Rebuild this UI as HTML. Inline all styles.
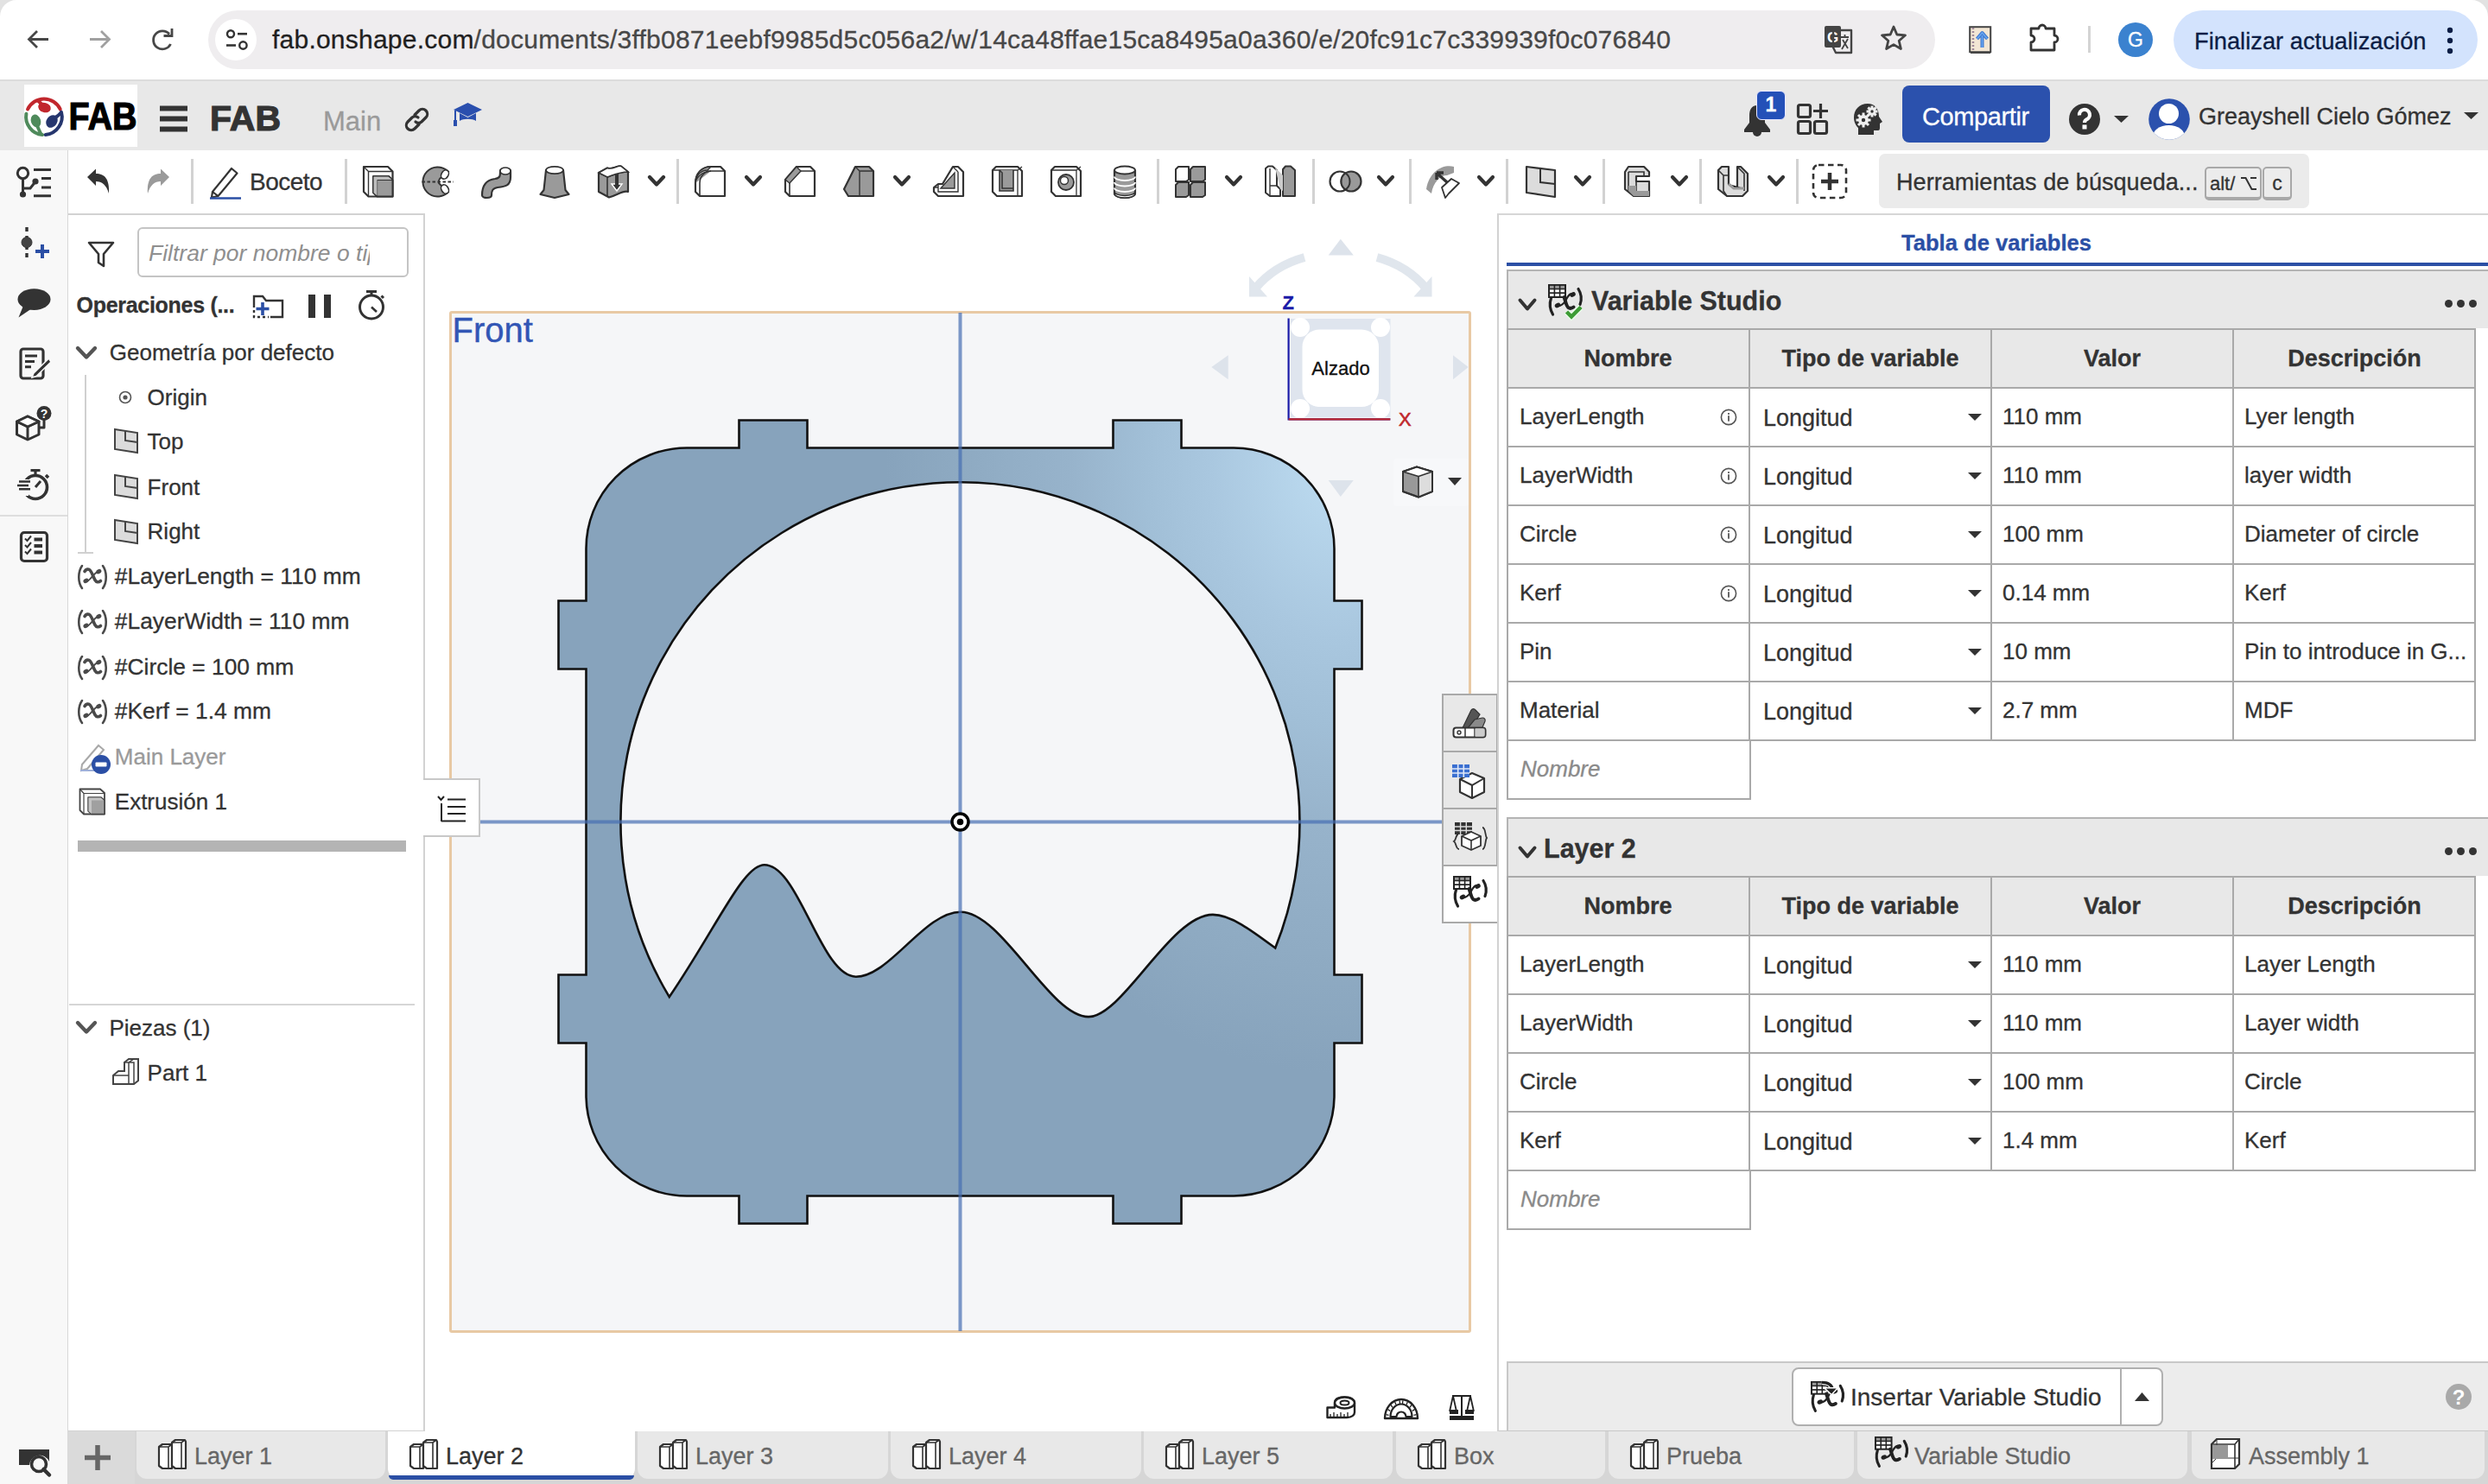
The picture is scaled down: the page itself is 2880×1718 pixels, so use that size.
<!DOCTYPE html>
<html><head><meta charset="utf-8">
<style>
*{box-sizing:border-box;margin:0;padding:0}
html,body{width:2880px;height:1718px;overflow:hidden;background:#fff;font-family:"Liberation Sans",sans-serif;color:#333}
.a{position:absolute}
.t{position:absolute;line-height:1;white-space:nowrap;-webkit-text-stroke:0.3px currentColor}
svg{position:absolute;overflow:visible}
</style></head><body>

<!-- ============ BROWSER BAR ============ -->
<div class="a" style="left:0;top:0;width:2880px;height:92px;background:#fff"></div>
<div class="a" style="left:241px;top:12px;width:1999px;height:68px;border-radius:34px;background:#efedef"></div>
<div class="a" style="left:249px;top:22px;width:48px;height:48px;border-radius:24px;background:#fff"></div>
<div class="t" style="left:315px;top:31px;font-size:30px;color:#1f1f1f;letter-spacing:0.23px">fab.onshape.com<span style="color:#474747">/documents/3ffb0871eebf9985d5c056a2/w/14ca48ffae15ca8495a0a360/e/20fc91c7c339939f0c076840</span></div>
<div class="a" style="left:2516px;top:12px;width:352px;height:68px;border-radius:34px;background:#d3e3fd"></div>
<div class="t" style="left:2540px;top:34px;font-size:27.3px;color:#0b1d45">Finalizar actualización</div>
<div class="a" style="left:2452px;top:26px;width:40px;height:40px;border-radius:20px;background:#3b82cf"></div>
<div class="t" style="left:2452px;top:34.5px;font-size:23px;color:#fff;width:40px;text-align:center">G</div>

<!-- ============ ONSHAPE HEADER ============ -->
<div class="a" style="left:0;top:92px;width:2880px;height:82px;background:#e8e8e8;border-top:2px solid #dcdcdc"></div>
<div class="a" style="left:28px;top:98px;width:131px;height:72px;background:#fff"></div>
<div class="t" style="left:243px;top:117px;font-size:41px;font-weight:700;color:#333;-webkit-text-stroke:1.2px #333">FAB</div>
<div class="t" style="left:374px;top:125px;font-size:31px;color:#9a9a9a">Main</div>
<div class="a" style="left:2202px;top:99px;width:171px;height:66px;border-radius:8px;background:#2b51ad"></div>
<div class="t" style="left:2225px;top:121px;font-size:29px;color:#fff;letter-spacing:-0.4px">Compartir</div>
<div class="t" style="left:2545px;top:122px;font-size:27px;color:#333">Greayshell Cielo Gómez</div>

<!-- ============ LEFT ICON STRIP ============ -->
<div class="a" style="left:0;top:174px;width:80px;height:1544px;background:#f8f8f8;border-right:2px solid #d8d8d8"></div>
<div class="a" style="left:0;top:596px;width:78px;height:2px;background:#dedede"></div>

<svg style="left:0;top:0" width="40" height="40"><path d="M0 40 V19 A19 19 0 0 1 19 0 H40 V-10 H-10 V40 Z" fill="#e2e2e2"/></svg><svg style="left:2840px;top:0" width="40" height="40"><path d="M40 40 V19 A19 19 0 0 0 21 0 H0 V-10 H50 V40 Z" fill="#e2e2e2"/></svg>
<svg style="left:30px;top:33px" width="28" height="26"><path d="M26 12.5 H4 M13 3 L3.5 12.5 L13 22" fill="none" stroke="#474747" stroke-width="2.8"/></svg>
<svg style="left:102px;top:33px" width="28" height="26"><path d="M2 12.5 H24 M15 3 L24.5 12.5 L15 22" fill="none" stroke="#a0a0a0" stroke-width="2.8"/></svg>
<svg style="left:174px;top:32px" width="30" height="29"><path d="M23.5 19 A10.5 10.5 0 1 1 22 7.5" fill="none" stroke="#474747" stroke-width="2.8"/><path d="M15.5 9.5 H25 V1" fill="none" stroke="#474747" stroke-width="2.8"/></svg>
<svg style="left:258px;top:33px" width="32" height="26"><circle cx="9" cy="6.2" r="4" fill="none" stroke="#333" stroke-width="2.4"/><path d="M17 6.2 H28" stroke="#333" stroke-width="2.6"/><circle cx="23.4" cy="19.5" r="4.2" fill="none" stroke="#333" stroke-width="2.4"/><path d="M4 19.5 H15" stroke="#333" stroke-width="2.6"/></svg>
<svg style="left:2111px;top:29px" width="35" height="34"><rect x="1" y="1" width="19" height="25" rx="2" fill="#444"/><text x="10.5" y="20" text-anchor="middle" font-family="Liberation Sans" font-weight="700" font-size="17" fill="#fff">G</text><path d="M14 6 H32 V32 H14 L11 26 V6 Z" fill="none" stroke="#444" stroke-width="2.4" stroke-linejoin="round"/><path d="M20 14 H29 M24.5 11 V14 M21 28 L28 16 M22 17 L28 27" stroke="#444" stroke-width="1.8"/></svg>
<svg style="left:2176px;top:28px" width="32" height="32"><polygon points="16,3 19.8,12 29.5,12.8 22.2,19.2 24.4,28.5 16,23.6 7.6,28.5 9.8,19.2 2.5,12.8 12.2,12" fill="none" stroke="#444" stroke-width="2.8" stroke-linejoin="round"/></svg>
<svg style="left:2279px;top:30px" width="27" height="33"><rect x="1.2" y="1.2" width="24" height="29" fill="#f2e6d4" stroke="#444" stroke-width="2"/><path d="M5 2 V30" stroke="#a08a9a" stroke-width="2.5" stroke-dasharray="2 2"/><path d="M2 31 H25" stroke="#444" stroke-width="2"/><path d="M15.5 25 V11 M9.5 15 L15.5 8 L21.5 15" fill="none" stroke="#3e78d0" stroke-width="4" stroke-linejoin="round"/><path d="M15.5 25 V11 M9.5 15 L15.5 8 L21.5 15" fill="none" stroke="#6aa7f0" stroke-width="1.6"/></svg>
<svg style="left:2348px;top:27px" width="36" height="34"><path d="M3 6 H12 A4 4 0 0 1 20 6 H30 V14 A4 4 0 0 1 30 22 V31 H3 V22 A4 4 0 0 0 3 14 Z" fill="none" stroke="#333" stroke-width="2.8" stroke-linejoin="round"/></svg>
<div class="a" style="left:2417px;top:30px;width:3px;height:31px;background:#d4d4d4"></div>
<svg style="left:2829px;top:30px" width="14" height="34"><circle cx="7" cy="5" r="3.2" fill="#0b1d45"/><circle cx="7" cy="17" r="3.2" fill="#0b1d45"/><circle cx="7" cy="29" r="3.2" fill="#0b1d45"/></svg>
<svg style="left:28px;top:98px" width="131" height="72"><g fill="none" stroke-width="4" stroke-linecap="round"><path d="M4.05 28.5 A20.8 20.8 0 0 1 41.75 28.5" stroke="#c1272d"/><path d="M2.42 33.7 A20.8 20.8 0 0 0 21.1 58" stroke="#4f8a5b"/><path d="M43 31.9 A20.8 20.8 0 0 1 24.7 58" stroke="#26366e"/></g><g transform="rotate(18 23.5 26.5)"><ellipse cx="23.5" cy="26.5" rx="7.5" ry="5.6" fill="#c1272d"/></g><path d="M13 19 C16 21 18 23 20 26 L24 24 C21 20 18 18 16 16 Z" fill="#c1272d"/><g transform="rotate(-18 13.5 42)"><ellipse cx="13.5" cy="42" rx="5.6" ry="7.6" fill="#4f8a5b"/></g><path d="M12 46 C14 50 16 54 17 57 L21 56 C19 52 17 48 16 44 Z" fill="#4f8a5b"/><g transform="rotate(35 32 42.5)"><ellipse cx="32" cy="42.5" rx="6.2" ry="7.8" fill="#26366e"/></g><path d="M34 37 C37 35 40 33 42 30 L44 34 C41 37 38 39 36 41 Z" fill="#26366e"/><text x="51.5" y="51.6" font-family="Liberation Sans" font-weight="700" font-size="45" fill="#000" stroke="#000" stroke-width="1.2" textLength="79" lengthAdjust="spacingAndGlyphs">FAB</text></svg>
<svg style="left:185px;top:122px" width="32" height="31"><path d="M0 3.5 H32 M0 15.5 H32 M0 27.5 H32" stroke="#333" stroke-width="6"/></svg>
<svg style="left:467px;top:124px" width="31" height="29"><g fill="none" stroke="#333" stroke-width="3.2" stroke-linecap="round"><path d="M13 9 L18 4 A5.5 5.5 0 0 1 26 12 L21 17 A5.5 5.5 0 0 1 14 17"/><path d="M18 20 L13 25 A5.5 5.5 0 0 1 5 17 L10 12 A5.5 5.5 0 0 1 17 12"/></g></svg>
<svg style="left:524px;top:118px" width="35" height="30"><polygon points="17.5,1 34,9 17.5,17 1,9" fill="#2a4fae"/><path d="M8 13 V22 C12 19 23 19 27 22 V13 L17.5 18 Z" fill="#2a4fae"/><path d="M3 10 V22" stroke="#2a4fae" stroke-width="2"/><rect x="1" y="21" width="4" height="7" fill="#2a4fae"/></svg>
<svg style="left:2017px;top:118px" width="34" height="40"><path d="M17 4 C10 4 8 10 8 16 V24 L2 32 V35 H32 V32 L26 24 V16 C26 10 24 4 17 4 Z" fill="#333"/><path d="M12 35 A5 5 0 0 0 22 35 Z" fill="#333"/></svg>
<div class="a" style="left:2033px;top:105px;width:34px;height:34px;border-radius:6px;background:#2450b8;border:1.5px solid #e8e8ff"></div>
<div class="t" style="left:2033px;top:110px;width:34px;text-align:center;font-size:23px;font-weight:700;color:#fff">1</div>
<svg style="left:2079px;top:119px" width="39" height="38"><g fill="none" stroke="#333" stroke-width="3.2"><rect x="2.5" y="2.5" width="14" height="14" rx="2"/><rect x="2.5" y="21.5" width="14" height="14" rx="2"/><rect x="21.5" y="21.5" width="14" height="14" rx="2"/><path d="M28.5 1 V18 M20 9.5 H37"/></g></svg>
<svg style="left:2145px;top:119px" width="36" height="38"><path d="M17 1 C7 1 1 8 1 17 C1 23 4 27 6 29 V37 H24 V32 H29 C31 32 31 30 31 28 V24 L34 22 L30 16 C30 7 25 1 17 1 Z" fill="#333"/><g fill="#eee"><circle cx="12" cy="20" r="6"/><circle cx="22" cy="10" r="4.5"/></g><g fill="#333"><circle cx="12" cy="20" r="2.2"/><circle cx="22" cy="10" r="1.7"/></g><g stroke="#eee" stroke-width="3"><path d="M12 11.5 V28.5 M3.5 20 H20.5 M6 14 L18 26 M6 26 L18 14"/><path d="M22 3.5 V16.5 M15.5 10 H28.5 M17.4 5.4 L26.6 14.6 M17.4 14.6 L26.6 5.4"/></g><g fill="#333"><circle cx="12" cy="20" r="2.2"/><circle cx="22" cy="10" r="1.7"/></g></svg>
<svg style="left:2394px;top:119px" width="38" height="38"><circle cx="19" cy="19" r="18" fill="#333"/><path d="M13 14.5 A6 6 0 1 1 21 19.5 C19.5 20.3 19 21 19 23" fill="none" stroke="#fff" stroke-width="4.2"/><rect x="16.5" y="25.5" width="5" height="5" fill="#fff"/></svg>
<svg style="left:2447px;top:134px" width="17" height="8"><polygon points="0,0 17,0 8.5,8" fill="#333"/></svg>
<svg style="left:2487px;top:114px" width="48" height="48"><defs><clipPath id="avc"><circle cx="24" cy="24" r="23.8"/></clipPath></defs><circle cx="24" cy="24" r="23.8" fill="#2b51ad"/><g clip-path="url(#avc)" fill="#fff"><circle cx="23.5" cy="17.5" r="11.5"/><ellipse cx="23.5" cy="45" rx="19" ry="14"/></g></svg>
<svg style="left:2852px;top:130px" width="17" height="8"><polygon points="0,0 17,0 8.5,8" fill="#333"/></svg>
<svg style="left:17px;top:190px" width="46" height="42"><g fill="none" stroke="#333" stroke-width="3"><circle cx="9.5" cy="10.5" r="6.2"/><path d="M9.5 16.7 V35 M9.5 28 H18 L23.5 21"/><path d="M22 6.6 H42 M31 16.5 H42 M31 27 H42 M22 36.8 H42"/></g><circle cx="24" cy="20" r="3.6" fill="#333"/><circle cx="9.5" cy="35" r="3.6" fill="#333"/></svg>
<svg style="left:22px;top:262px" width="38" height="38"><path d="M9 1 V6 M9 11 V14 M9 23 V27 M9 31 V36" stroke="#333" stroke-width="3.4"/><circle cx="9" cy="18.6" r="6" fill="#444" stroke="#333" stroke-width="1"/><path d="M27 21 V37 M19 29 H35" stroke="#2b4fa5" stroke-width="4"/></svg>
<svg style="left:19px;top:332px" width="42" height="38"><ellipse cx="20.5" cy="14.6" rx="19" ry="12.4" fill="#333"/><path d="M8 22 L2.5 35.5 L18 25 Z" fill="#333"/></svg>
<svg style="left:22px;top:402px" width="37" height="39"><rect x="2" y="2" width="26" height="34" rx="3" fill="none" stroke="#333" stroke-width="3.2"/><path d="M7 10 H21 M7 16.5 H18 M7 22.8 H14" stroke="#333" stroke-width="3"/><path d="M34.5 13 L17 30 L15 35 L20 33.5 L37 17 Z" fill="#333" stroke="#f8f8f8" stroke-width="1.5"/></svg>
<svg style="left:17px;top:469px" width="44" height="42"><g fill="none" stroke="#333" stroke-width="3" stroke-linejoin="round"><path d="M15 13 L28 19 V34 L15 40 L2.5 34 V19 Z"/><path d="M2.5 19 L15 25 L28 19 M15 25 V40"/><path d="M28 26 H34 V17"/></g><path d="M15 13 L28 19 L15 25 L2.5 19 Z" fill="#fff" stroke="#333" stroke-width="3" stroke-linejoin="round"/><circle cx="34" cy="9.5" r="8.5" fill="#333"/><text x="34" y="15" text-anchor="middle" font-family="Liberation Sans" font-weight="700" font-size="14" fill="#fff">?</text></svg>
<svg style="left:20px;top:541px" width="40" height="40"><circle cx="21" cy="23" r="13.5" fill="none" stroke="#333" stroke-width="3.6"/><path d="M15.5 3.5 H26.5 M21 3.5 V9" stroke="#333" stroke-width="3.2"/><path d="M33 9 L36 12" stroke="#333" stroke-width="3.5"/><path d="M21 23 L27 16" stroke="#333" stroke-width="3"/><rect x="0" y="14" width="13" height="19" fill="#f8f8f8"/><path d="M2 16.5 H15 M0 21 H13 M2 25.3 H15" stroke="#333" stroke-width="2.6"/></svg>
<svg style="left:22px;top:614px" width="36" height="38"><rect x="2.5" y="2.5" width="30" height="33" rx="3.5" fill="none" stroke="#333" stroke-width="3.2"/><g fill="none" stroke="#333" stroke-width="2"><path d="M7 9.5 L9.5 12 L14 6.5"/><path d="M7 17 L9.5 19.5 L14 14"/><path d="M7 24.5 L9.5 27 L14 21.5"/></g><path d="M17.5 10.5 H27 M17.5 18 H27 M17.5 25.5 H27" stroke="#333" stroke-width="4"/></svg>
<svg style="left:20px;top:1674px" width="40" height="36"><path d="M2 4 H37 V18 A12 12 0 0 0 14 22 H2 Z" fill="#333"/><circle cx="25" cy="21" r="8.5" fill="#f8f8f8" stroke="#333" stroke-width="3.6"/><path d="M30.5 27 L37 33.5" stroke="#333" stroke-width="4.5" stroke-linecap="round"/></svg>
<!-- ============ TOOLBAR ============ -->
<div class="a" style="left:79px;top:174px;width:2801px;height:73px;background:#fff"></div>
<div class="t" style="left:289px;top:197px;font-size:28px;color:#333;letter-spacing:-0.5px">Boceto</div>
<div class="a" style="left:2175px;top:178px;width:498px;height:63px;border-radius:7px;background:#ebebeb"></div>
<div class="t" style="left:2195px;top:197px;font-size:27.1px;color:#333">Herramientas de búsqueda...</div>

<svg style="left:99px;top:194px" width="30" height="31"><path d="M2 11 L12 1.5 V7 C22 7 28 13 27 30 C24 20 19 16 12 16 V21 Z" fill="#333"/></svg>
<svg style="left:170px;top:194px" width="28" height="31"><path d="M26 11 L16 1.5 V7 C6 7 0 13 1 30 C4 20 9 16 16 16 V21 Z" fill="#9a9a9a"/></svg>
<div class="a" style="left:220.5px;top:184px;width:3px;height:52px;background:#d2d2d2"></div>
<svg style="left:241px;top:191px" width="40" height="40"><path d="M5 31 L27 4 L33.5 9.5 L11.5 36 L4 37.5 Z M5 31 L11.5 36" fill="#fff" stroke="#333" stroke-width="2.2" stroke-linejoin="round"/><path d="M2 38.5 H38" stroke="#2b4fa5" stroke-width="2.4"/></svg>
<div class="a" style="left:398.5px;top:184px;width:3px;height:52px;background:#d2d2d2"></div>
<svg style="left:419px;top:191px" width="38" height="38"><path d="M2 2 H30 L35.5 7.5 V36.5 H7.5 L2 31 Z" fill="#fff" stroke="#333" stroke-width="2.2" stroke-linejoin="round"/><path d="M7.5 36.5 V7.5 H35.5 M2 2 L7.5 7.5" fill="none" stroke="#333" stroke-width="1.4"/><path d="M13 13 H31 L35.5 17.5 V36.5 H17.5 L13 32 Z" fill="#9a9a9a" stroke="#333" stroke-width="2" stroke-linejoin="round"/><path d="M17.5 36.5 V17.5 H35.5 M13 13 L17.5 17.5" fill="none" stroke="#333" stroke-width="1.2"/><path d="M13.5 13.5 H30.5 L34.5 17 H17.5 V35.5 L13.5 32 Z" fill="#bdbdbd"/></svg>
<svg style="left:488px;top:192px" width="38" height="38"><path d="M30 6 A17 17 0 1 0 30 31 A6 6 0 0 1 24 24 L20 20 A6 6 0 0 1 24 13 A6 6 0 0 1 30 6 Z" fill="#9a9a9a" stroke="#333" stroke-width="2"/><ellipse cx="27" cy="10" rx="4" ry="5.5" transform="rotate(30 27 10)" fill="#fff" stroke="#333" stroke-width="1.6"/><ellipse cx="27" cy="27" rx="4" ry="5.5" transform="rotate(-30 27 27)" fill="#fff" stroke="#333" stroke-width="1.6"/><path d="M0.5 18.5 H37" stroke="#333" stroke-width="1.8" stroke-dasharray="3.5 2.5"/></svg>
<svg style="left:555px;top:191px" width="40" height="40"><path d="M24 7 C24 3 36 3 36 7 V14 C36 24 30 25 21 26 C15 27 14 30 14 35 C14 39 3 39 3 35 C3 22 10 17 18 16 C24 15 24 13 24 7 Z" fill="#9a9a9a" stroke="#333" stroke-width="2.2"/><ellipse cx="30" cy="7" rx="6" ry="4" fill="#fff" stroke="#333" stroke-width="1.6"/></svg>
<svg style="left:624px;top:191px" width="38" height="40"><path d="M8 6 H28 L30.5 29 L34.5 34 L18 38 L1.5 34 L5.5 29 Z" fill="#9a9a9a" stroke="#333" stroke-width="2.2" stroke-linejoin="round"/><ellipse cx="18" cy="6" rx="10" ry="4.2" fill="#fff" stroke="#333" stroke-width="1.8"/></svg>
<svg style="left:691px;top:191px" width="38" height="40"><path d="M2 9 L12 3.5 C18 6 24 0 28 1.5 L36 8 V31 C30 29 24 35 14 37.5 L2 31 Z" fill="#9a9a9a" stroke="#333" stroke-width="2.2" stroke-linejoin="round"/><path d="M2 9 L12 14 C18 12 26 8 36 8 M12 14 V37" fill="none" stroke="#333" stroke-width="1.6"/><path d="M12 3.5 C18 6 24 0 28 1.5 L36 8 C26 8 18 12 12 14 L2 9 Z" fill="#fff" stroke="#333" stroke-width="1.6"/><path d="M23 10 V24 M17 22 L23 30 L29 22 Z" fill="#333" stroke="#fff" stroke-width="1.4"/><path d="M23 10 V24" stroke="#333" stroke-width="4"/></svg>
<svg style="left:750px;top:203px" width="20" height="13"><polyline points="2,2 10,10.5 18,2" fill="none" stroke="#333" stroke-width="4.2" stroke-linecap="round" stroke-linejoin="round"/></svg>
<div class="a" style="left:782.5px;top:184px;width:3px;height:52px;background:#d2d2d2"></div>
<svg style="left:803px;top:191px" width="38" height="38"><path d="M2 21 C2 10 9 2 20 2 H31 L36 7 V36 H7 L2 31 Z" fill="#fff" stroke="#333" stroke-width="2.2" stroke-linejoin="round"/><path d="M2 21 C2 12 9 6 16 6 L20 2 C9 2 2 10 2 21 Z M2 21 C3 14 9 8 20 7" fill="#9a9a9a" stroke="#333" stroke-width="1.4"/><path d="M7 21 V36 M7 21 C7 13 13 7 20 7 H36" fill="none" stroke="#333" stroke-width="1.6"/></svg>
<svg style="left:862px;top:203px" width="20" height="13"><polyline points="2,2 10,10.5 18,2" fill="none" stroke="#333" stroke-width="4.2" stroke-linecap="round" stroke-linejoin="round"/></svg>
<svg style="left:907px;top:191px" width="38" height="38"><path d="M2 17 L15 2 H31 L36 7 V36 H7 L2 31 Z" fill="#fff" stroke="#333" stroke-width="2.2" stroke-linejoin="round"/><path d="M2 17 L15 2 L20 7 L7 21 Z" fill="#9a9a9a" stroke="#333" stroke-width="1.4"/><path d="M7 21 V36 M20 7 H36" fill="none" stroke="#333" stroke-width="1.6"/></svg>
<svg style="left:975px;top:191px" width="38" height="38"><path d="M2 28 L15 2 H31 L36 7 V36 H7 Z" fill="#9a9a9a" stroke="#333" stroke-width="2.2" stroke-linejoin="round"/><path d="M15 2 L20 7 V36 M20 7 H36" fill="none" stroke="#333" stroke-width="1.4"/></svg>
<svg style="left:1034px;top:203px" width="20" height="13"><polyline points="2,2 10,10.5 18,2" fill="none" stroke="#333" stroke-width="4.2" stroke-linecap="round" stroke-linejoin="round"/></svg>
<svg style="left:1079px;top:191px" width="38" height="38"><path d="M2 26 L7 22 H12 L24 2 H30 L36 8 V36 H7 L2 31 Z" fill="#fff" stroke="#333" stroke-width="2.2" stroke-linejoin="round"/><path d="M7 22 V31 H30 V8 M2 26 H7 M24 2 L30 8" fill="none" stroke="#333" stroke-width="1.4"/><path d="M10 27 L26 9 V27 Z" fill="#9a9a9a" stroke="#333" stroke-width="1.4"/></svg>
<svg style="left:1147px;top:191px" width="38" height="38"><path d="M2 6 L6 2 H31 L36 7 V36 H7 L2 31 Z" fill="#fff" stroke="#333" stroke-width="2.2" stroke-linejoin="round"/><path d="M2 6 H31 V36 M31 6 L36 2" fill="none" stroke="#333" stroke-width="1.3"/><path d="M10 6 V30 H26 V6 M10 6 L13 9 V27 H26" fill="#9a9a9a" stroke="#333" stroke-width="1.6"/></svg>
<svg style="left:1215px;top:191px" width="38" height="38"><path d="M2 6 L6 2 H31 L36 7 V36 H7 L2 31 Z" fill="#fff" stroke="#333" stroke-width="2.2" stroke-linejoin="round"/><path d="M2 6 H31 V36 M31 6 L36 2" fill="none" stroke="#333" stroke-width="1.3"/><circle cx="19" cy="20" r="9" fill="#9a9a9a" stroke="#333" stroke-width="1.8"/><circle cx="17" cy="18" r="4.5" fill="#fff" stroke="#333" stroke-width="1.4"/></svg>
<svg style="left:1288px;top:191px" width="30" height="40"><path d="M2 6 V33 A12 5 0 0 0 26 33 V6" fill="#9a9a9a" stroke="#333" stroke-width="2.2"/><ellipse cx="14" cy="6" rx="12" ry="4.5" fill="#fff" stroke="#333" stroke-width="2"/><path d="M2 13.5 A12 4.5 0 0 0 26 13.5 M2 20 A12 4.5 0 0 0 26 20 M2 26.5 A12 4.5 0 0 0 26 26.5" fill="none" stroke="#fff" stroke-width="1.8"/><path d="M2 31 A12 4.5 0 0 0 26 31 V33 A12 5 0 0 1 2 33 Z" fill="#fff" stroke="#333" stroke-width="1.4"/></svg>
<div class="a" style="left:1338.5px;top:184px;width:3px;height:52px;background:#d2d2d2"></div>
<svg style="left:1359px;top:191px" width="38" height="38"><g stroke="#333" stroke-width="2" stroke-linejoin="round"><path d="M2 5 L5 2 H17 V17 L14 19 H2 Z" fill="#fff"/><path d="M19 5 L22 2 H36 V17 L33 19 H19 Z" fill="#9a9a9a"/><path d="M2 23 L5 20 H17 V35 L14 37 H2 Z" fill="#9a9a9a"/><path d="M19 23 L22 20 H36 V35 L33 37 H19 Z" fill="#9a9a9a"/></g></svg>
<svg style="left:1418px;top:203px" width="20" height="13"><polyline points="2,2 10,10.5 18,2" fill="none" stroke="#333" stroke-width="4.2" stroke-linecap="round" stroke-linejoin="round"/></svg>
<svg style="left:1463px;top:191px" width="38" height="38"><path d="M2 4 L5 1.5 H10 L15 6 V24 L19 28 V36 H7 L2 32 Z" fill="#fff" stroke="#333" stroke-width="2" stroke-linejoin="round"/><path d="M22 5 L25 1.5 H31 L36 6 V36 H22 Z" fill="#9a9a9a" stroke="#333" stroke-width="2" stroke-linejoin="round"/><path d="M7 4 V36 M15 24 H7" fill="none" stroke="#333" stroke-width="1.4"/><path d="M13 3 L22 12 V30 L19 28 Z" fill="#ccc"/></svg>
<div class="a" style="left:1518.5px;top:184px;width:3px;height:52px;background:#d2d2d2"></div>
<svg style="left:1538px;top:191px" width="40" height="38"><circle cx="13" cy="19" r="11.5" fill="#fff" stroke="#333" stroke-width="2.2"/><circle cx="26" cy="19" r="11.5" fill="#9a9a9a" stroke="#333" stroke-width="2.2"/><path d="M19.5 9.5 A11.5 11.5 0 0 1 19.5 28.5 A11.5 11.5 0 0 1 19.5 9.5" fill="#9a9a9a" stroke="#333" stroke-width="2"/></svg>
<svg style="left:1594px;top:203px" width="20" height="13"><polyline points="2,2 10,10.5 18,2" fill="none" stroke="#333" stroke-width="4.2" stroke-linecap="round" stroke-linejoin="round"/></svg>
<div class="a" style="left:1630.5px;top:184px;width:3px;height:52px;background:#d2d2d2"></div>
<svg style="left:1649px;top:189px" width="42" height="42"><path d="M34 4 C22 1 6 8 2 30 L8 35 C10 22 18 14 26 14 L34 11 Z" fill="#9a9a9a"/><path d="M20 28 L31 18 L40 23 L28 35 L24 40 Z" fill="#fff" stroke="#333" stroke-width="1.8" stroke-linejoin="round"/><path d="M26 22 L16 13 M14 11 V19 M14 11 H22" fill="none" stroke="#333" stroke-width="3.4"/></svg>
<svg style="left:1710px;top:203px" width="20" height="13"><polyline points="2,2 10,10.5 18,2" fill="none" stroke="#333" stroke-width="4.2" stroke-linecap="round" stroke-linejoin="round"/></svg>
<div class="a" style="left:1742.5px;top:184px;width:3px;height:52px;background:#d2d2d2"></div>
<svg style="left:1765px;top:191px" width="38" height="38"><path d="M2 2 L35 6 V37 L2 32 Z" fill="#dcdcdc" stroke="#333" stroke-width="2.2" stroke-linejoin="round"/><path d="M18 4 V20 L35 22" fill="none" stroke="#333" stroke-width="2"/></svg>
<svg style="left:1822px;top:203px" width="20" height="13"><polyline points="2,2 10,10.5 18,2" fill="none" stroke="#333" stroke-width="4.2" stroke-linecap="round" stroke-linejoin="round"/></svg>
<div class="a" style="left:1854.5px;top:184px;width:3px;height:52px;background:#d2d2d2"></div>
<svg style="left:1879px;top:191px" width="32" height="38"><path d="M6 2 H24 L30 8 V13 H15 V19 H30 V36 H12 L2 28 V8 Z" fill="#dcdcdc" stroke="#333" stroke-width="2.2" stroke-linejoin="round"/><path d="M6 8 H24 V13 M6 8 V30 L12 36 M15 19 V30 H12" fill="none" stroke="#333" stroke-width="1.6"/><path d="M6 24 V30 L12 36 H30 V30 H15 V24 Z" fill="#9a9a9a"/></svg>
<svg style="left:1934px;top:203px" width="20" height="13"><polyline points="2,2 10,10.5 18,2" fill="none" stroke="#333" stroke-width="4.2" stroke-linecap="round" stroke-linejoin="round"/></svg>
<div class="a" style="left:1966.5px;top:184px;width:3px;height:52px;background:#d2d2d2"></div>
<svg style="left:1987px;top:191px" width="38" height="38"><path d="M6 2 H14 V22 L20 27 H24 V2 L28 2 L36 10 V30 L30 36 H12 L2 28 V6 Z" fill="#dcdcdc" stroke="#333" stroke-width="2.2" stroke-linejoin="round"/><path d="M2 6 L8 12 V30 L12 36 M8 12 L14 12 M24 2 L32 10 V30" fill="none" stroke="#333" stroke-width="1.6"/><path d="M14 22 L20 27 H32" stroke="#999" stroke-width="3"/></svg>
<svg style="left:2046px;top:203px" width="20" height="13"><polyline points="2,2 10,10.5 18,2" fill="none" stroke="#333" stroke-width="4.2" stroke-linecap="round" stroke-linejoin="round"/></svg>
<div class="a" style="left:2078.5px;top:184px;width:3px;height:52px;background:#d2d2d2"></div>
<svg style="left:2097px;top:189px" width="42" height="42"><rect x="2" y="2" width="38" height="38" rx="6" fill="none" stroke="#333" stroke-width="2.6" stroke-dasharray="6.5 4.5"/><path d="M21 11 V31 M11 21 H31" stroke="#333" stroke-width="4.5"/></svg>
<div class="a" style="left:2552px;top:193px;width:66px;height:39px;border:2px solid #a8a8a8;border-bottom-width:4px;border-radius:5px;background:#ececec"></div>
<div class="t" style="left:2558px;top:202px;font-size:22px;color:#333">alt/</div><svg style="left:2593px;top:204px" width="20" height="17"><path d="M1 2 H6.5 L13.5 15 H19 M12 2 H19" fill="none" stroke="#333" stroke-width="2"/></svg>
<div class="a" style="left:2619px;top:193px;width:34px;height:39px;border:2px solid #a8a8a8;border-bottom-width:4px;border-radius:5px;background:#ececec"></div>
<div class="t" style="left:2619px;top:201px;width:34px;text-align:center;font-size:23px;color:#333">c</div>
<!-- ============ FEATURE PANEL ============ -->
<div class="a" style="left:79px;top:247px;width:413px;height:1411px;background:#fff;border:2px solid #d2d2d2;border-left:none"></div>

<!-- ============ VIEWPORT ============ -->
<div class="a" style="left:492px;top:247px;width:1241px;height:1410px;background:#fff"></div>
<div class="a" style="left:520px;top:360px;width:1183px;height:1183px;background:#f5f6f8;border:3px solid #e8c9a4;border-radius:3px"></div>


<!-- viewport drawing -->
<svg class="a" style="left:0;top:0" width="2880" height="1718" viewBox="0 0 2880 1718">
<defs>
<radialGradient id="sg" gradientUnits="userSpaceOnUse" cx="1545" cy="540" r="520" fx="1545" fy="540" gradientTransform="translate(1545 540) scale(1 1.35) translate(-1545 -540)">
<stop offset="0" stop-color="#bddcf1"/><stop offset="0.28" stop-color="#a9c7df"/><stop offset="0.42" stop-color="#a1bfd7"/><stop offset="0.59" stop-color="#97b3cb"/><stop offset="0.83" stop-color="#8eaac2"/><stop offset="1" stop-color="#87a3bc"/></radialGradient>
</defs>
<path fill="url(#sg)" fill-rule="evenodd" stroke="#111" stroke-width="2.6" stroke-linejoin="miter" d="M795.5 518.5 H855.5 V486.5 H934.5 V518.5 H1288.5 V486.5 H1367.5 V518.5 H1428 A116.5 116.5 0 0 1 1544.5 635 V695.5 H1576.5 V774.5 H1544.5 V1128.5 H1576.5 V1207.5 H1544.5 V1268 A116.5 116.5 0 0 1 1428 1384.5 H1367.5 V1416.5 H1288.5 V1384.5 H934.5 V1416.5 H855.5 V1384.5 H795 A116.5 116.5 0 0 1 678.5 1268 V1207.5 H646.5 V1128.5 H678.5 V774.5 H646.5 V695.5 H678.5 V635 A116.5 116.5 0 0 1 795 518.5 Z
M774.8 1154.1 A393 393 0 1 1 1476.2 1097.5 C1450 1078 1425 1058.9 1403.9 1058.9 C1355 1058.9 1300 1177.1 1260 1177.1 C1215 1177.1 1160 1055.7 1112 1055.7 C1070 1055.7 1030 1130.7 990.8 1130.7 C950 1130.7 925 1001.3 884.8 1001.3 C860 1001.3 830 1073 774.8 1154.1 Z"/>
<line x1="1111.5" y1="362" x2="1111.5" y2="1541" stroke="rgb(70,110,178)" stroke-opacity="0.7" stroke-width="4"/>
<line x1="522" y1="951.5" x2="1700" y2="951.5" stroke="rgb(70,110,178)" stroke-opacity="0.7" stroke-width="4"/>
<circle cx="1111.5" cy="951.5" r="9.5" fill="#fff" stroke="#000" stroke-width="3.5"/>
<circle cx="1111.5" cy="951.5" r="3.8" fill="#000"/>
</svg>

<svg style="left:101px;top:279px" width="32" height="31"><path d="M2 2 H30 L19 15 V29 L13 25 V15 Z" fill="none" stroke="#333" stroke-width="2.6" stroke-linejoin="round"/></svg>
<div class="a" style="left:159px;top:263px;width:314px;height:58px;border:2px solid #c4c4c4;border-radius:6px;background:#fff;overflow:hidden"><div class="t" style="left:11px;top:15px;font-size:26.5px;font-style:italic;color:#8f8f8f;width:256px;overflow:hidden;-webkit-text-stroke:0">Filtrar por nombre o tipo</div></div>
<div class="t" style="left:88.6px;top:340.5px;font-size:25px;color:#333;font-weight:700;font-style:normal;letter-spacing:-0.3px">Operaciones (...</div>
<svg style="left:291px;top:340px" width="38" height="29"><path d="M3 9 V27 H36 V8 H17 L13 3 H3 Z" fill="none" stroke="#333" stroke-width="2.4" stroke-dasharray="none"/><rect x="0" y="13" width="22" height="16" fill="#fff"/><path d="M3 13 V27 H20" fill="none" stroke="#333" stroke-width="2.4" stroke-dasharray="3 3"/><path d="M13 10 V25 M5.5 17.5 H20.5" stroke="#2b4fa5" stroke-width="3.6"/></svg>
<div class="a" style="left:357px;top:341px;width:8px;height:27px;background:#333"></div><div class="a" style="left:375px;top:341px;width:8px;height:27px;background:#333"></div>
<svg style="left:413px;top:335px" width="34" height="37"><circle cx="17" cy="20.5" r="13.5" fill="none" stroke="#333" stroke-width="3"/><path d="M11 2.5 H23 M17 2.5 V7" stroke="#333" stroke-width="3"/><path d="M17 20.5 L23 26" stroke="#333" stroke-width="2.6"/><path d="M28.5 7.5 L31 10" stroke="#333" stroke-width="3"/></svg>
<svg style="left:88px;top:401px" width="24" height="15"><polyline points="2,2 12,12.5 22,2" fill="none" stroke="#555" stroke-width="4.4" stroke-linecap="round" stroke-linejoin="round"/></svg>
<div class="t" style="left:126.8px;top:395.0px;font-size:26px;color:#333;font-weight:400;font-style:normal;">Geometría por defecto</div>
<div class="a" style="left:98px;top:434px;width:2px;height:206px;background:#d0d0d0"></div><div class="a" style="left:90px;top:639px;width:18px;height:2px;background:#d0d0d0"></div>
<svg style="left:136px;top:451px" width="18" height="18"><circle cx="9" cy="9" r="6.5" fill="none" stroke="#555" stroke-width="1.6"/><circle cx="9" cy="9" r="2.6" fill="#555"/></svg>
<div class="t" style="left:170.6px;top:447.1px;font-size:26px;color:#333;font-weight:400;font-style:normal;">Origin</div>
<svg style="left:131px;top:495px" width="31" height="31"><path d="M2 2 L28 6 V29 L2 25 Z" fill="#dcdcdc" stroke="#444" stroke-width="2"/><path d="M14 4 V15 L28 17" fill="none" stroke="#444" stroke-width="2"/></svg>
<div class="t" style="left:170.6px;top:498.0px;font-size:26px;color:#333;font-weight:400;font-style:normal;">Top</div>
<svg style="left:131px;top:548px" width="31" height="31"><path d="M2 2 L28 6 V29 L2 25 Z" fill="#dcdcdc" stroke="#444" stroke-width="2"/><path d="M14 4 V15 L28 17" fill="none" stroke="#444" stroke-width="2"/></svg>
<div class="t" style="left:170.6px;top:550.6px;font-size:26px;color:#333;font-weight:400;font-style:normal;">Front</div>
<svg style="left:131px;top:600px" width="31" height="31"><path d="M2 2 L28 6 V29 L2 25 Z" fill="#dcdcdc" stroke="#444" stroke-width="2"/><path d="M14 4 V15 L28 17" fill="none" stroke="#444" stroke-width="2"/></svg>
<div class="t" style="left:170.6px;top:602.3px;font-size:26px;color:#333;font-weight:400;font-style:normal;">Right</div>
<svg style="left:89px;top:652.5px" width="36" height="30"><path d="M6 2 C1 9 1 21 6 28" fill="none" stroke="#4a4a4a" stroke-width="2.6" stroke-linecap="round"/><path d="M30 2 C35 9 35 21 30 28" fill="none" stroke="#4a4a4a" stroke-width="2.6" stroke-linecap="round"/><path d="M9 8.5 C10.5 6 13.5 5 15.5 7.5 C17.5 10 19 15 21 18.5 C22.5 21 25 21.5 27.5 19.5" fill="none" stroke="#4a4a4a" stroke-width="3.6" stroke-linecap="round"/><path d="M25.5 8.5 C22 9 19 13 16 16.5 C14 19 12.5 20 10.5 19.5" fill="none" stroke="#4a4a4a" stroke-width="2.0" stroke-linecap="round"/><ellipse cx="25.3" cy="8.6" rx="3.2" ry="2.5" transform="rotate(-30 25.3 8.6)" fill="#4a4a4a"/><ellipse cx="10.5" cy="19.3" rx="3.2" ry="2.5" transform="rotate(-30 10.5 19.3)" fill="#4a4a4a"/></svg>
<div class="t" style="left:132.8px;top:654.1px;font-size:26.4px;color:#333;font-weight:400;font-style:normal;">#LayerLength = 110 mm</div>
<svg style="left:89px;top:704.5px" width="36" height="30"><path d="M6 2 C1 9 1 21 6 28" fill="none" stroke="#4a4a4a" stroke-width="2.6" stroke-linecap="round"/><path d="M30 2 C35 9 35 21 30 28" fill="none" stroke="#4a4a4a" stroke-width="2.6" stroke-linecap="round"/><path d="M9 8.5 C10.5 6 13.5 5 15.5 7.5 C17.5 10 19 15 21 18.5 C22.5 21 25 21.5 27.5 19.5" fill="none" stroke="#4a4a4a" stroke-width="3.6" stroke-linecap="round"/><path d="M25.5 8.5 C22 9 19 13 16 16.5 C14 19 12.5 20 10.5 19.5" fill="none" stroke="#4a4a4a" stroke-width="2.0" stroke-linecap="round"/><ellipse cx="25.3" cy="8.6" rx="3.2" ry="2.5" transform="rotate(-30 25.3 8.6)" fill="#4a4a4a"/><ellipse cx="10.5" cy="19.3" rx="3.2" ry="2.5" transform="rotate(-30 10.5 19.3)" fill="#4a4a4a"/></svg>
<div class="t" style="left:132.8px;top:706.1px;font-size:26.4px;color:#333;font-weight:400;font-style:normal;">#LayerWidth = 110 mm</div>
<svg style="left:89px;top:757.5px" width="36" height="30"><path d="M6 2 C1 9 1 21 6 28" fill="none" stroke="#4a4a4a" stroke-width="2.6" stroke-linecap="round"/><path d="M30 2 C35 9 35 21 30 28" fill="none" stroke="#4a4a4a" stroke-width="2.6" stroke-linecap="round"/><path d="M9 8.5 C10.5 6 13.5 5 15.5 7.5 C17.5 10 19 15 21 18.5 C22.5 21 25 21.5 27.5 19.5" fill="none" stroke="#4a4a4a" stroke-width="3.6" stroke-linecap="round"/><path d="M25.5 8.5 C22 9 19 13 16 16.5 C14 19 12.5 20 10.5 19.5" fill="none" stroke="#4a4a4a" stroke-width="2.0" stroke-linecap="round"/><ellipse cx="25.3" cy="8.6" rx="3.2" ry="2.5" transform="rotate(-30 25.3 8.6)" fill="#4a4a4a"/><ellipse cx="10.5" cy="19.3" rx="3.2" ry="2.5" transform="rotate(-30 10.5 19.3)" fill="#4a4a4a"/></svg>
<div class="t" style="left:132.8px;top:759.1px;font-size:26.4px;color:#333;font-weight:400;font-style:normal;">#Circle = 100 mm</div>
<svg style="left:89px;top:808.5px" width="36" height="30"><path d="M6 2 C1 9 1 21 6 28" fill="none" stroke="#4a4a4a" stroke-width="2.6" stroke-linecap="round"/><path d="M30 2 C35 9 35 21 30 28" fill="none" stroke="#4a4a4a" stroke-width="2.6" stroke-linecap="round"/><path d="M9 8.5 C10.5 6 13.5 5 15.5 7.5 C17.5 10 19 15 21 18.5 C22.5 21 25 21.5 27.5 19.5" fill="none" stroke="#4a4a4a" stroke-width="3.6" stroke-linecap="round"/><path d="M25.5 8.5 C22 9 19 13 16 16.5 C14 19 12.5 20 10.5 19.5" fill="none" stroke="#4a4a4a" stroke-width="2.0" stroke-linecap="round"/><ellipse cx="25.3" cy="8.6" rx="3.2" ry="2.5" transform="rotate(-30 25.3 8.6)" fill="#4a4a4a"/><ellipse cx="10.5" cy="19.3" rx="3.2" ry="2.5" transform="rotate(-30 10.5 19.3)" fill="#4a4a4a"/></svg>
<div class="t" style="left:132.8px;top:810.1px;font-size:26.4px;color:#333;font-weight:400;font-style:normal;">#Kerf = 1.4 mm</div>
<svg style="left:91px;top:859px" width="42" height="38"><path d="M4 26 L23 4 L29 9 L10 31 L3 33 Z" fill="none" stroke="#a8a8a8" stroke-width="2"/><path d="M2 33 H26" stroke="#9fb0d8" stroke-width="2"/><circle cx="26" cy="26" r="11" fill="#2b4fa5"/><rect x="19.5" y="23.5" width="13" height="5" rx="1" fill="#fff"/></svg>
<div class="t" style="left:132.8px;top:863.1px;font-size:26px;color:#9a9a9a;font-weight:400;font-style:normal;">Main Layer</div>
<svg style="left:91px;top:912px" width="32" height="32"><path d="M1.5 1.5 H25 L30 6 V30.5 H6 L1.5 26 Z" fill="#fff" stroke="#444" stroke-width="1.8" stroke-linejoin="round"/><path d="M6 30.5 V6.5 H30 M1.5 1.5 L6 6.5" fill="none" stroke="#444" stroke-width="1.2"/><path d="M11 11 H26 L30 14.5 V30.5 H15 L11 27 Z" fill="#a0a0a0" stroke="#444" stroke-width="1.5" stroke-linejoin="round"/><path d="M11.5 11.5 H25.5 L29 14.5 H15 V30 L11.5 27 Z" fill="#c4c4c4"/></svg>
<div class="t" style="left:132.8px;top:915.3px;font-size:26px;color:#333;font-weight:400;font-style:normal;">Extrusión 1</div>
<div class="a" style="left:90px;top:973px;width:380px;height:13px;background:#b4b4b4"></div>
<div class="a" style="left:80px;top:1162px;width:400px;height:2px;background:#d6d6d6"></div>
<svg style="left:88px;top:1182px" width="24" height="15"><polyline points="2,2 12,12.5 22,2" fill="none" stroke="#555" stroke-width="4.4" stroke-linecap="round" stroke-linejoin="round"/></svg>
<div class="t" style="left:126.4px;top:1176.9px;font-size:26px;color:#333;font-weight:400;font-style:normal;">Piezas (1)</div>
<svg style="left:129px;top:1225px" width="33" height="32"><path d="M2 20 L8 15 H15 V5 L20 1 H31 V26 L26 30 H2 Z" fill="#fff" stroke="#444" stroke-width="2"/><path d="M2 20 H20 V30 M15 15 V5 H26 V30 M20 20 V5 L26 1" fill="none" stroke="#444" stroke-width="1.5"/></svg>
<div class="t" style="left:170.6px;top:1229.3px;font-size:26px;color:#333;font-weight:400;font-style:normal;">Part 1</div>
<div class="a" style="left:490px;top:901px;width:66px;height:68px;background:#fff;border:2px solid #c8c8c8;border-left:none"></div>
<svg style="left:505px;top:920px" width="36" height="32"><path d="M2 2 L5.5 6 L9 2" fill="none" stroke="#222" stroke-width="2"/><path d="M6 10 V31 M13 5.5 H34 M13 14 H34 M13 22 H34 M6 30.5 H34" stroke="#222" stroke-width="2"/></svg>
<div class="t" style="left:523.5px;top:362px;font-size:40px;color:#3256b5;-webkit-text-stroke:0.4px #3256b5">Front</div>
<svg class="a" style="left:1390px;top:265px" width="320" height="330" viewBox="1390 265 320 330"><g fill="#dde3eb"><path d="M1537.7 295.4 L1551.8 276.7 L1566.8 295.4 Z"/><path d="M1537.7 556 L1551.8 575 L1566.8 556 Z"/><path d="M1421.7 411.3 L1402.3 425 L1421.7 439.2 Z"/><path d="M1682 411.3 L1699.7 425 L1682 439.2 Z"/></g><g fill="none" stroke="#e0e6ed" stroke-width="10"><path d="M1510 298 C1488 304 1468 316 1453 334"/><path d="M1594 298 C1616 304 1636 316 1651 334"/></g><path d="M1446 320 L1446 343.5 L1467 343.5 Z" fill="#e0e6ed"/><path d="M1657.5 320 L1657.5 343.5 L1636.5 343.5 Z" fill="#e0e6ed"/><rect x="1494" y="369" width="115.5" height="114" fill="#dfe5ee"/><rect x="1507.5" y="381.5" width="88.5" height="89.5" rx="20" fill="#fff"/><g fill="#fff"><circle cx="1505" cy="379" r="11"/><circle cx="1598" cy="379" r="11"/><circle cx="1505" cy="473" r="11"/><circle cx="1598" cy="473" r="11"/></g><path d="M1491.6 368.5 V485.3 H1609.3" fill="none" stroke="#1a1aa8" stroke-width="2.2"/><path d="M1491.6 485.3 H1609.3" fill="none" stroke="#c0282d" stroke-width="2.2"/></svg>
<div class="t" style="left:1500px;top:416px;width:104px;text-align:center;font-size:22px;color:#111">Alzado</div>
<div class="t" style="left:1484.5px;top:340px;font-size:22px;font-weight:700;color:#1a1aa8">Z</div>
<div class="t" style="left:1619px;top:475px;font-size:22px;color:#c0282d;-webkit-text-stroke:0.6px #c0282d">X</div>
<div class="a" style="left:1613px;top:531px;width:87px;height:55px;background:#f7f8fa;border-radius:4px"></div>
<svg style="left:1622px;top:539px" width="40" height="38"><path d="M2 7 L18 1.5 L36 7 V30 L20 36.5 L2 30 Z" fill="#999" stroke="#333" stroke-width="2" stroke-linejoin="round"/><path d="M20 12.5 L36 7 V30 L20 36.5 Z" fill="#ddd"/><path d="M2 7 L18 1.5 L36 7 L20 12.5 Z" fill="#fff" stroke="#333" stroke-width="1.6" stroke-linejoin="round"/><path d="M20 12.5 V36.5" stroke="#333" stroke-width="1.6"/><path d="M2 7 L18 1.5 L36 7 V30 L20 36.5 L2 30 Z" fill="none" stroke="#333" stroke-width="2" stroke-linejoin="round"/></svg>
<svg style="left:1676px;top:553px" width="16" height="9"><polygon points="0,0 16,0 8,9" fill="#333"/></svg>
<div class="a" style="left:1669px;top:803px;width:65px;height:68px;background:#e8e8e8;border:2px solid #a9a9a9;"></div>
<div class="a" style="left:1669px;top:869px;width:65px;height:68px;background:#e8e8e8;border:2px solid #a9a9a9;"></div>
<div class="a" style="left:1669px;top:935px;width:65px;height:68px;background:#e8e8e8;border:2px solid #a9a9a9;"></div>
<div class="a" style="left:1669px;top:1001px;width:66px;height:68px;background:#fff;border:2px solid #a9a9a9;border-right:none;"></div>
<svg style="left:1680px;top:818px" width="42" height="38"><path d="M10 31 L23 4 A3 3 0 0 1 28 4 L33 9 L20 31 Z" fill="#555" stroke="#333" stroke-width="1.2"/><path d="M14 31 L27 15 L36 13 A3 3 0 0 1 39 17 L33 31 Z" fill="#8a8a8a" stroke="#333" stroke-width="1.2"/><rect x="2.5" y="24.5" width="37" height="11" rx="3" fill="#fff" stroke="#333" stroke-width="2"/><path d="M16 25 V35 M27 25 V35" stroke="#333" stroke-width="1.5"/><rect x="27.5" y="25.5" width="11" height="9" fill="#ccc"/><circle cx="9" cy="30" r="2" fill="none" stroke="#333" stroke-width="1.4"/></svg>
<svg style="left:1680px;top:884px" width="42" height="40"><path d="M10 18 L24 11 L38 17 V33 L24 40 L10 33 Z" fill="#fff" stroke="#333" stroke-width="2.2" stroke-linejoin="round"/><path d="M10 18 L24 25 L38 17 M24 25 V40" fill="none" stroke="#333" stroke-width="2"/><rect x="1" y="1" width="20" height="15" fill="#3a6fd0"/><path d="M1 6 H21 M1 11 H21 M7.7 1 V16 M14.3 1 V16" stroke="#dfe8f8" stroke-width="1.6"/></svg>
<svg style="left:1680px;top:950px" width="42" height="40"><rect x="4" y="2" width="20" height="14" fill="#333"/><path d="M4 7 H24 M4 11.5 H24 M10.6 2 V16 M17.3 2 V16" stroke="#ddd" stroke-width="1.4"/><path d="M12 18 L23 13 L34 18 V29 L23 34 L12 29 Z" fill="#fff" stroke="#333" stroke-width="1.8" stroke-linejoin="round"/><path d="M12 18 L23 23 L34 18 M23 23 V34" fill="none" stroke="#333" stroke-width="1.6"/><path d="M8 16 C5 16 6 22 3 24 C6 26 5 33 9 33 M36 8 C40 8 39 18 41 20 C39 22 40 33 36 33" fill="none" stroke="#333" stroke-width="1.8"/></svg>
<svg style="left:1681px;top:1013px" width="46" height="44"><g transform="scale(1.0)"><rect x="1" y="1" width="21" height="16" fill="#222"/><g fill="#fff"><rect x="3" y="7.3" width="4.6" height="3"/><rect x="9.2" y="7.3" width="4.6" height="3"/><rect x="15.4" y="7.3" width="4.6" height="3"/><rect x="3" y="12" width="4.6" height="3"/><rect x="9.2" y="12" width="4.6" height="3"/><rect x="15.4" y="12" width="4.6" height="3"/></g><g fill="#9a9a9a"><rect x="3" y="2.8" width="4.6" height="3"/><rect x="9.2" y="2.8" width="4.6" height="3"/><rect x="15.4" y="2.8" width="4.6" height="3"/></g><path d="M4.5 17 C2.5 23 3 30 6.5 36" fill="none" stroke="#222" stroke-width="3.2" stroke-linecap="round"/><path d="M36 6.5 C39.5 12 40 19 38 24.5" fill="none" stroke="#222" stroke-width="3.2" stroke-linecap="round"/><path d="M19.5 16 C21.5 21 22 27 25 28.5 C27 29.3 29 28.6 30.5 27.5" fill="none" stroke="#222" stroke-width="4" stroke-linecap="round"/><path d="M30 12.5 C27 11 24.5 13.5 21.5 19.5 C19 24 15.5 26.5 11.5 26" fill="none" stroke="#222" stroke-width="2.2" stroke-linecap="round"/><ellipse cx="29.5" cy="13" rx="3.4" ry="2.6" transform="rotate(-25 29.5 13)" fill="#222"/><ellipse cx="12" cy="25.5" rx="3.4" ry="2.6" transform="rotate(-25 12 25.5)" fill="#222"/></g></svg>
<svg style="left:1535px;top:1616px" width="35" height="27"><path d="M1.5 13.5 H10 C10 8 8 1.5 21 1.5 C30 1.5 33 5 33 8 V19 C33 22 30 25 24 25 H1.5 Z" fill="#fff" stroke="#222" stroke-width="2.4" stroke-linejoin="round"/><ellipse cx="21.5" cy="8" rx="11.5" ry="6.5" fill="#fff" stroke="#222" stroke-width="2.4"/><ellipse cx="21.5" cy="8" rx="5" ry="2.6" fill="none" stroke="#222" stroke-width="2"/><path d="M5 25 V21 M9 25 V19 M13 25 V21 M17 25 V19 M21 25 V21 M25 25 V19" stroke="#222" stroke-width="1.3"/></svg>
<svg style="left:1601px;top:1616px" width="42" height="28"><path d="M2 26 A19 22 0 0 1 40 26 Z" fill="#fff" stroke="#222" stroke-width="2.4" stroke-linejoin="round"/><path d="M35.5 22.4 L38.6 21.7 M33.8 17.4 L36.6 15.6 M30.9 13.3 L33.0 10.5 M27.0 10.3 L28.3 7.0 M22.5 9.0 L22.9 5.3 M19.5 9.0 L19.1 5.3 M15.0 10.3 L13.7 7.0 M11.1 13.3 L9.0 10.5 M8.2 17.4 L5.4 15.6 M6.5 22.4 L3.4 21.7" stroke="#222" stroke-width="1.3"/><path d="M8.5 24 A12.5 14.5 0 0 1 33.5 24 H26.5 A5.5 5.5 0 0 0 15.5 24 Z" fill="#fff" stroke="#222" stroke-width="2.2" stroke-linejoin="round"/></svg>
<svg style="left:1677px;top:1614px" width="30" height="30"><path d="M15 2 V26" stroke="#222" stroke-width="2"/><path d="M4 2 H26" stroke="#222" stroke-width="2"/><path d="M5 2 L1 20 M5 2 L9 20 M25 2 L21 20 M25 2 L29 20" stroke="#222" stroke-width="1.8"/><rect x="1" y="18" width="10" height="5" fill="#222"/><rect x="19" y="18" width="10" height="5" fill="#222"/><rect x="1" y="25" width="28" height="5" fill="#222"/></svg>
<!-- ============ RIGHT PANEL ============ -->
<div class="a" style="left:1733px;top:247px;width:1147px;height:1411px;background:#fff;border-left:2px solid #d2d2d2;border-top:2px solid #d6d6d6;border-bottom:2px solid #c8c8c8"></div>

<div class="t" style="left:2201px;top:269px;font-size:25.6px;font-weight:700;color:#2b4fa5">Tabla de variables</div>
<div class="a" style="left:1744px;top:304px;width:1136px;height:4px;background:#2b4fa5"></div>
<div class="a" style="left:1744px;top:312px;width:1136px;height:68px;background:#e8e8e8;border-top:2px solid #b4b4b4;border-left:2px solid #b4b4b4"></div>
<svg style="left:1758px;top:346px" width="20" height="13"><polyline points="1.5,1.5 10.0,11.5 18.5,1.5" fill="none" stroke="#333" stroke-width="4" stroke-linecap="round" stroke-linejoin="round"/></svg>
<div class="t" style="left:1842px;top:333.1px;font-size:30.5px;font-weight:700;color:#333">Variable Studio</div>
<div class="a" style="left:2830px;top:346.5px;width:9px;height:9px;border-radius:5px;background:#333"></div><div class="a" style="left:2844px;top:346.5px;width:9px;height:9px;border-radius:5px;background:#333"></div><div class="a" style="left:2858px;top:346.5px;width:9px;height:9px;border-radius:5px;background:#333"></div>
<div class="a" style="left:1744px;top:380px;width:1122px;height:70px;background:#e8e8e8;border:2px solid #a9a9a9"></div>
<div class="t" style="left:1744px;width:281px;text-align:center;top:401.8px;font-size:27px;font-weight:700;color:#333">Nombre</div>
<div class="t" style="left:2025px;width:280px;text-align:center;top:401.8px;font-size:27px;font-weight:700;color:#333">Tipo de variable</div>
<div class="t" style="left:2305px;width:280px;text-align:center;top:401.8px;font-size:27px;font-weight:700;color:#333">Valor</div>
<div class="t" style="left:2585px;width:281px;text-align:center;top:401.8px;font-size:27px;font-weight:700;color:#333">Descripción</div>
<div class="a" style="left:2024px;top:380px;width:2px;height:478px;background:#a9a9a9"></div>
<div class="a" style="left:2304px;top:380px;width:2px;height:478px;background:#a9a9a9"></div>
<div class="a" style="left:2584px;top:380px;width:2px;height:478px;background:#a9a9a9"></div>
<div class="a" style="left:1744px;top:448px;width:1122px;height:70px;border:2px solid #a9a9a9;background:#fff"></div>
<div class="a" style="left:1744px;top:516px;width:1122px;height:70px;border:2px solid #a9a9a9;background:#fff"></div>
<div class="a" style="left:1744px;top:584px;width:1122px;height:70px;border:2px solid #a9a9a9;background:#fff"></div>
<div class="a" style="left:1744px;top:652px;width:1122px;height:70px;border:2px solid #a9a9a9;background:#fff"></div>
<div class="a" style="left:1744px;top:720px;width:1122px;height:70px;border:2px solid #a9a9a9;background:#fff"></div>
<div class="a" style="left:1744px;top:788px;width:1122px;height:70px;border:2px solid #a9a9a9;background:#fff"></div>
<div class="a" style="left:2024px;top:380px;width:2px;height:478px;background:#a9a9a9"></div>
<div class="a" style="left:2304px;top:380px;width:2px;height:478px;background:#a9a9a9"></div>
<div class="a" style="left:2584px;top:380px;width:2px;height:478px;background:#a9a9a9"></div>
<div class="t" style="left:1759px;top:469.3px;font-size:26px;color:#333">LayerLength</div>
<svg style="left:1991px;top:473px" width="20" height="20"><circle cx="10" cy="10" r="8.6" fill="none" stroke="#555" stroke-width="1.6"/><rect x="9.1" y="8.2" width="1.8" height="6.5" fill="#555"/><rect x="9.1" y="5" width="1.8" height="1.9" fill="#555"/></svg>
<div class="t" style="left:2041px;top:470.8px;font-size:27px;color:#333">Longitud</div>
<svg style="left:2278.0px;top:479.0px" width="16" height="8"><polygon points="0,0 16,0 8.0,8" fill="#333"/></svg>
<div class="t" style="left:2318px;top:469.3px;font-size:26px;color:#333">110 mm</div>
<div class="t" style="left:2598px;top:469.3px;font-size:26px;color:#333">Lyer length</div>
<div class="t" style="left:1759px;top:537.3px;font-size:26px;color:#333">LayerWidth</div>
<svg style="left:1991px;top:541px" width="20" height="20"><circle cx="10" cy="10" r="8.6" fill="none" stroke="#555" stroke-width="1.6"/><rect x="9.1" y="8.2" width="1.8" height="6.5" fill="#555"/><rect x="9.1" y="5" width="1.8" height="1.9" fill="#555"/></svg>
<div class="t" style="left:2041px;top:538.8px;font-size:27px;color:#333">Longitud</div>
<svg style="left:2278.0px;top:547.0px" width="16" height="8"><polygon points="0,0 16,0 8.0,8" fill="#333"/></svg>
<div class="t" style="left:2318px;top:537.3px;font-size:26px;color:#333">110 mm</div>
<div class="t" style="left:2598px;top:537.3px;font-size:26px;color:#333">layer width</div>
<div class="t" style="left:1759px;top:605.3px;font-size:26px;color:#333">Circle</div>
<svg style="left:1991px;top:609px" width="20" height="20"><circle cx="10" cy="10" r="8.6" fill="none" stroke="#555" stroke-width="1.6"/><rect x="9.1" y="8.2" width="1.8" height="6.5" fill="#555"/><rect x="9.1" y="5" width="1.8" height="1.9" fill="#555"/></svg>
<div class="t" style="left:2041px;top:606.8px;font-size:27px;color:#333">Longitud</div>
<svg style="left:2278.0px;top:615.0px" width="16" height="8"><polygon points="0,0 16,0 8.0,8" fill="#333"/></svg>
<div class="t" style="left:2318px;top:605.3px;font-size:26px;color:#333">100 mm</div>
<div class="t" style="left:2598px;top:605.3px;font-size:26px;color:#333">Diameter of circle</div>
<div class="t" style="left:1759px;top:673.3px;font-size:26px;color:#333">Kerf</div>
<svg style="left:1991px;top:677px" width="20" height="20"><circle cx="10" cy="10" r="8.6" fill="none" stroke="#555" stroke-width="1.6"/><rect x="9.1" y="8.2" width="1.8" height="6.5" fill="#555"/><rect x="9.1" y="5" width="1.8" height="1.9" fill="#555"/></svg>
<div class="t" style="left:2041px;top:674.8px;font-size:27px;color:#333">Longitud</div>
<svg style="left:2278.0px;top:683.0px" width="16" height="8"><polygon points="0,0 16,0 8.0,8" fill="#333"/></svg>
<div class="t" style="left:2318px;top:673.3px;font-size:26px;color:#333">0.14 mm</div>
<div class="t" style="left:2598px;top:673.3px;font-size:26px;color:#333">Kerf</div>
<div class="t" style="left:1759px;top:741.3px;font-size:26px;color:#333">Pin</div>
<div class="t" style="left:2041px;top:742.8px;font-size:27px;color:#333">Longitud</div>
<svg style="left:2278.0px;top:751.0px" width="16" height="8"><polygon points="0,0 16,0 8.0,8" fill="#333"/></svg>
<div class="t" style="left:2318px;top:741.3px;font-size:26px;color:#333">10 mm</div>
<div class="t" style="left:2598px;top:741.3px;font-size:26px;color:#333">Pin to introduce in G...</div>
<div class="t" style="left:1759px;top:809.3px;font-size:26px;color:#333">Material</div>
<div class="t" style="left:2041px;top:810.8px;font-size:27px;color:#333">Longitud</div>
<svg style="left:2278.0px;top:819.0px" width="16" height="8"><polygon points="0,0 16,0 8.0,8" fill="#333"/></svg>
<div class="t" style="left:2318px;top:809.3px;font-size:26px;color:#333">2.7 mm</div>
<div class="t" style="left:2598px;top:809.3px;font-size:26px;color:#333">MDF</div>
<div class="a" style="left:1744px;top:856px;width:283px;height:70px;border:2px solid #a9a9a9;background:#fff"></div>
<div class="t" style="left:1760px;top:877.3px;font-size:26px;font-style:italic;color:#8a8a8a">Nombre</div>
<div class="a" style="left:1744px;top:946px;width:1136px;height:68px;background:#e8e8e8;border-top:2px solid #b4b4b4;border-left:2px solid #b4b4b4"></div>
<svg style="left:1758px;top:980px" width="20" height="13"><polyline points="1.5,1.5 10.0,11.5 18.5,1.5" fill="none" stroke="#333" stroke-width="4" stroke-linecap="round" stroke-linejoin="round"/></svg>
<div class="t" style="left:1787px;top:967.1px;font-size:30.5px;font-weight:700;color:#333">Layer 2</div>
<div class="a" style="left:2830px;top:980.5px;width:9px;height:9px;border-radius:5px;background:#333"></div><div class="a" style="left:2844px;top:980.5px;width:9px;height:9px;border-radius:5px;background:#333"></div><div class="a" style="left:2858px;top:980.5px;width:9px;height:9px;border-radius:5px;background:#333"></div>
<div class="a" style="left:1744px;top:1014px;width:1122px;height:70px;background:#e8e8e8;border:2px solid #a9a9a9"></div>
<div class="t" style="left:1744px;width:281px;text-align:center;top:1035.8px;font-size:27px;font-weight:700;color:#333">Nombre</div>
<div class="t" style="left:2025px;width:280px;text-align:center;top:1035.8px;font-size:27px;font-weight:700;color:#333">Tipo de variable</div>
<div class="t" style="left:2305px;width:280px;text-align:center;top:1035.8px;font-size:27px;font-weight:700;color:#333">Valor</div>
<div class="t" style="left:2585px;width:281px;text-align:center;top:1035.8px;font-size:27px;font-weight:700;color:#333">Descripción</div>
<div class="a" style="left:2024px;top:1014px;width:2px;height:342px;background:#a9a9a9"></div>
<div class="a" style="left:2304px;top:1014px;width:2px;height:342px;background:#a9a9a9"></div>
<div class="a" style="left:2584px;top:1014px;width:2px;height:342px;background:#a9a9a9"></div>
<div class="a" style="left:1744px;top:1082px;width:1122px;height:70px;border:2px solid #a9a9a9;background:#fff"></div>
<div class="a" style="left:1744px;top:1150px;width:1122px;height:70px;border:2px solid #a9a9a9;background:#fff"></div>
<div class="a" style="left:1744px;top:1218px;width:1122px;height:70px;border:2px solid #a9a9a9;background:#fff"></div>
<div class="a" style="left:1744px;top:1286px;width:1122px;height:70px;border:2px solid #a9a9a9;background:#fff"></div>
<div class="a" style="left:2024px;top:1014px;width:2px;height:342px;background:#a9a9a9"></div>
<div class="a" style="left:2304px;top:1014px;width:2px;height:342px;background:#a9a9a9"></div>
<div class="a" style="left:2584px;top:1014px;width:2px;height:342px;background:#a9a9a9"></div>
<div class="t" style="left:1759px;top:1103.3px;font-size:26px;color:#333">LayerLength</div>
<div class="t" style="left:2041px;top:1104.8px;font-size:27px;color:#333">Longitud</div>
<svg style="left:2278.0px;top:1113px" width="16" height="8"><polygon points="0,0 16,0 8.0,8" fill="#333"/></svg>
<div class="t" style="left:2318px;top:1103.3px;font-size:26px;color:#333">110 mm</div>
<div class="t" style="left:2598px;top:1103.3px;font-size:26px;color:#333">Layer Length</div>
<div class="t" style="left:1759px;top:1171.3px;font-size:26px;color:#333">LayerWidth</div>
<div class="t" style="left:2041px;top:1172.8px;font-size:27px;color:#333">Longitud</div>
<svg style="left:2278.0px;top:1181px" width="16" height="8"><polygon points="0,0 16,0 8.0,8" fill="#333"/></svg>
<div class="t" style="left:2318px;top:1171.3px;font-size:26px;color:#333">110 mm</div>
<div class="t" style="left:2598px;top:1171.3px;font-size:26px;color:#333">Layer width</div>
<div class="t" style="left:1759px;top:1239.3px;font-size:26px;color:#333">Circle</div>
<div class="t" style="left:2041px;top:1240.8px;font-size:27px;color:#333">Longitud</div>
<svg style="left:2278.0px;top:1249px" width="16" height="8"><polygon points="0,0 16,0 8.0,8" fill="#333"/></svg>
<div class="t" style="left:2318px;top:1239.3px;font-size:26px;color:#333">100 mm</div>
<div class="t" style="left:2598px;top:1239.3px;font-size:26px;color:#333">Circle</div>
<div class="t" style="left:1759px;top:1307.3px;font-size:26px;color:#333">Kerf</div>
<div class="t" style="left:2041px;top:1308.8px;font-size:27px;color:#333">Longitud</div>
<svg style="left:2278.0px;top:1317px" width="16" height="8"><polygon points="0,0 16,0 8.0,8" fill="#333"/></svg>
<div class="t" style="left:2318px;top:1307.3px;font-size:26px;color:#333">1.4 mm</div>
<div class="t" style="left:2598px;top:1307.3px;font-size:26px;color:#333">Kerf</div>
<div class="a" style="left:1744px;top:1354px;width:283px;height:70px;border:2px solid #a9a9a9;background:#fff"></div>
<div class="t" style="left:1760px;top:1375.3px;font-size:26px;font-style:italic;color:#8a8a8a">Nombre</div>
<div class="a" style="left:1744px;top:1576px;width:1136px;height:82px;background:#ececec;border-top:2px solid #c8c8c8;border-left:2px solid #c8c8c8;border-bottom:2px solid #c8c8c8"></div>
<div class="a" style="left:2074px;top:1583px;width:430px;height:68px;background:#fff;border:2px solid #b0b0b0;border-radius:8px"></div>
<div class="a" style="left:2454px;top:1584px;width:2px;height:66px;background:#b0b0b0"></div>
<div class="t" style="left:2142px;top:1604px;font-size:28px;color:#333">Insertar Variable Studio</div>
<svg style="left:2471px;top:1612px" width="17" height="10"><polygon points="0,10 17,10 8.5,0" fill="#333"/></svg>
<svg style="left:2829px;top:1600px" width="34" height="34"><circle cx="17" cy="17" r="15" fill="#a9a9a9"/><text x="17" y="26" text-anchor="middle" font-family="Liberation Sans" font-weight="700" font-size="24" fill="#fff">?</text></svg>
<svg style="left:1791px;top:328px" width="46" height="44"><g transform="scale(1.0)"><rect x="1" y="1" width="21" height="16" fill="#222"/><g fill="#fff"><rect x="3" y="7.3" width="4.6" height="3"/><rect x="9.2" y="7.3" width="4.6" height="3"/><rect x="15.4" y="7.3" width="4.6" height="3"/><rect x="3" y="12" width="4.6" height="3"/><rect x="9.2" y="12" width="4.6" height="3"/><rect x="15.4" y="12" width="4.6" height="3"/></g><g fill="#9a9a9a"><rect x="3" y="2.8" width="4.6" height="3"/><rect x="9.2" y="2.8" width="4.6" height="3"/><rect x="15.4" y="2.8" width="4.6" height="3"/></g><path d="M4.5 17 C2.5 23 3 30 6.5 36" fill="none" stroke="#222" stroke-width="3.2" stroke-linecap="round"/><path d="M36 6.5 C39.5 12 40 19 38 24.5" fill="none" stroke="#222" stroke-width="3.2" stroke-linecap="round"/><path d="M19.5 16 C21.5 21 22 27 25 28.5 C27 29.3 29 28.6 30.5 27.5" fill="none" stroke="#222" stroke-width="4" stroke-linecap="round"/><path d="M30 12.5 C27 11 24.5 13.5 21.5 19.5 C19 24 15.5 26.5 11.5 26" fill="none" stroke="#222" stroke-width="2.2" stroke-linecap="round"/><ellipse cx="29.5" cy="13" rx="3.4" ry="2.6" transform="rotate(-25 29.5 13)" fill="#222"/><ellipse cx="12" cy="25.5" rx="3.4" ry="2.6" transform="rotate(-25 12 25.5)" fill="#222"/><path d="M22.5 33 L28 38.5 L39 27.5" fill="none" stroke="#eaffea" stroke-width="7" stroke-linejoin="miter"/><path d="M22.5 33 L28 38.5 L39 27.5" fill="none" stroke="#3d9b35" stroke-width="4.5"/></g></svg>
<svg style="left:2095px;top:1598px" width="45" height="43"><g transform="scale(0.98)"><rect x="1" y="1" width="21" height="16" fill="#222"/><g fill="#fff"><rect x="3" y="7.3" width="4.6" height="3"/><rect x="9.2" y="7.3" width="4.6" height="3"/><rect x="15.4" y="7.3" width="4.6" height="3"/><rect x="3" y="12" width="4.6" height="3"/><rect x="9.2" y="12" width="4.6" height="3"/><rect x="15.4" y="12" width="4.6" height="3"/></g><g fill="#9a9a9a"><rect x="3" y="2.8" width="4.6" height="3"/><rect x="9.2" y="2.8" width="4.6" height="3"/><rect x="15.4" y="2.8" width="4.6" height="3"/></g><path d="M4.5 17 C2.5 23 3 30 6.5 36" fill="none" stroke="#222" stroke-width="3.2" stroke-linecap="round"/><path d="M36 6.5 C39.5 12 40 19 38 24.5" fill="none" stroke="#222" stroke-width="3.2" stroke-linecap="round"/><path d="M19.5 16 C21.5 21 22 27 25 28.5 C27 29.3 29 28.6 30.5 27.5" fill="none" stroke="#222" stroke-width="4" stroke-linecap="round"/><path d="M30 12.5 C27 11 24.5 13.5 21.5 19.5 C19 24 15.5 26.5 11.5 26" fill="none" stroke="#222" stroke-width="2.2" stroke-linecap="round"/><ellipse cx="29.5" cy="13" rx="3.4" ry="2.6" transform="rotate(-25 29.5 13)" fill="#222"/><ellipse cx="12" cy="25.5" rx="3.4" ry="2.6" transform="rotate(-25 12 25.5)" fill="#222"/><path d="M14 2 C22 2 27 5 28 12" fill="none" stroke="#fff" stroke-width="6"/><path d="M14 2.5 C22 2.5 26 5 27 11" fill="none" stroke="#222" stroke-width="3.4"/><path d="M17 9 H33 L25.5 17 Z" fill="#222" stroke="#fff" stroke-width="1.5"/></g></svg>
<!-- ============ TAB BAR ============ -->
<div class="a" style="left:79px;top:1657px;width:2801px;height:61px;background:#d6d6d6"></div>
<div class="a" style="left:79px;top:1657px;width:77px;height:61px;background:#dadada"></div>
<svg style="left:97px;top:1672px" width="32" height="31"><path d="M16 1 V30 M1 15.5 H31" stroke="#666" stroke-width="5.5"/></svg>
<div class="a" style="left:158px;top:1657px;width:288px;height:55px;background:#e8e8e8;border-radius:0 0 12px 12px"></div>
<svg style="left:182px;top:1666px" width="35" height="36"><path d="M2 9 L6 6 H17 V34 H6 L2 31 Z" fill="#fff" stroke="#333" stroke-width="2.2" stroke-linejoin="round"/><path d="M2 9 H13 V34 M13 9 L17 6" fill="none" stroke="#333" stroke-width="1.6"/><path d="M17 4 L21 1 H32 L33 3 V34 H21 L17 31 Z" fill="#fff" stroke="#333" stroke-width="2.2" stroke-linejoin="round"/><path d="M17 4 H28 V34 M28 4 L32 1" fill="none" stroke="#333" stroke-width="1.6"/></svg>
<div class="t" style="left:225px;top:1673.1px;font-size:27px;color:#666">Layer 1</div>
<div class="a" style="left:449px;top:1657px;width:286px;height:55px;background:#fff;border-radius:0 0 12px 12px"></div>
<svg style="left:473px;top:1666px" width="35" height="36"><path d="M2 9 L6 6 H17 V34 H6 L2 31 Z" fill="#fff" stroke="#333" stroke-width="2.2" stroke-linejoin="round"/><path d="M2 9 H13 V34 M13 9 L17 6" fill="none" stroke="#333" stroke-width="1.6"/><path d="M17 4 L21 1 H32 L33 3 V34 H21 L17 31 Z" fill="#fff" stroke="#333" stroke-width="2.2" stroke-linejoin="round"/><path d="M17 4 H28 V34 M28 4 L32 1" fill="none" stroke="#333" stroke-width="1.6"/></svg>
<div class="t" style="left:516px;top:1673.1px;font-size:27px;color:#333">Layer 2</div>
<div class="a" style="left:450px;top:1708px;width:284px;height:5px;background:#2b4fa5;border-radius:0 0 5px 5px"></div>
<div class="a" style="left:738px;top:1657px;width:290px;height:55px;background:#e8e8e8;border-radius:0 0 12px 12px"></div>
<svg style="left:762px;top:1666px" width="35" height="36"><path d="M2 9 L6 6 H17 V34 H6 L2 31 Z" fill="#fff" stroke="#333" stroke-width="2.2" stroke-linejoin="round"/><path d="M2 9 H13 V34 M13 9 L17 6" fill="none" stroke="#333" stroke-width="1.6"/><path d="M17 4 L21 1 H32 L33 3 V34 H21 L17 31 Z" fill="#fff" stroke="#333" stroke-width="2.2" stroke-linejoin="round"/><path d="M17 4 H28 V34 M28 4 L32 1" fill="none" stroke="#333" stroke-width="1.6"/></svg>
<div class="t" style="left:805px;top:1673.1px;font-size:27px;color:#666">Layer 3</div>
<div class="a" style="left:1031px;top:1657px;width:290px;height:55px;background:#e8e8e8;border-radius:0 0 12px 12px"></div>
<svg style="left:1055px;top:1666px" width="35" height="36"><path d="M2 9 L6 6 H17 V34 H6 L2 31 Z" fill="#fff" stroke="#333" stroke-width="2.2" stroke-linejoin="round"/><path d="M2 9 H13 V34 M13 9 L17 6" fill="none" stroke="#333" stroke-width="1.6"/><path d="M17 4 L21 1 H32 L33 3 V34 H21 L17 31 Z" fill="#fff" stroke="#333" stroke-width="2.2" stroke-linejoin="round"/><path d="M17 4 H28 V34 M28 4 L32 1" fill="none" stroke="#333" stroke-width="1.6"/></svg>
<div class="t" style="left:1098px;top:1673.1px;font-size:27px;color:#666">Layer 4</div>
<div class="a" style="left:1324px;top:1657px;width:288px;height:55px;background:#e8e8e8;border-radius:0 0 12px 12px"></div>
<svg style="left:1348px;top:1666px" width="35" height="36"><path d="M2 9 L6 6 H17 V34 H6 L2 31 Z" fill="#fff" stroke="#333" stroke-width="2.2" stroke-linejoin="round"/><path d="M2 9 H13 V34 M13 9 L17 6" fill="none" stroke="#333" stroke-width="1.6"/><path d="M17 4 L21 1 H32 L33 3 V34 H21 L17 31 Z" fill="#fff" stroke="#333" stroke-width="2.2" stroke-linejoin="round"/><path d="M17 4 H28 V34 M28 4 L32 1" fill="none" stroke="#333" stroke-width="1.6"/></svg>
<div class="t" style="left:1391px;top:1673.1px;font-size:27px;color:#666">Layer 5</div>
<div class="a" style="left:1616px;top:1657px;width:242px;height:55px;background:#e8e8e8;border-radius:0 0 12px 12px"></div>
<svg style="left:1640px;top:1666px" width="35" height="36"><path d="M2 9 L6 6 H17 V34 H6 L2 31 Z" fill="#fff" stroke="#333" stroke-width="2.2" stroke-linejoin="round"/><path d="M2 9 H13 V34 M13 9 L17 6" fill="none" stroke="#333" stroke-width="1.6"/><path d="M17 4 L21 1 H32 L33 3 V34 H21 L17 31 Z" fill="#fff" stroke="#333" stroke-width="2.2" stroke-linejoin="round"/><path d="M17 4 H28 V34 M28 4 L32 1" fill="none" stroke="#333" stroke-width="1.6"/></svg>
<div class="t" style="left:1683px;top:1673.1px;font-size:27px;color:#666">Box</div>
<div class="a" style="left:1862px;top:1657px;width:284px;height:55px;background:#e8e8e8;border-radius:0 0 12px 12px"></div>
<svg style="left:1886px;top:1666px" width="35" height="36"><path d="M2 9 L6 6 H17 V34 H6 L2 31 Z" fill="#fff" stroke="#333" stroke-width="2.2" stroke-linejoin="round"/><path d="M2 9 H13 V34 M13 9 L17 6" fill="none" stroke="#333" stroke-width="1.6"/><path d="M17 4 L21 1 H32 L33 3 V34 H21 L17 31 Z" fill="#fff" stroke="#333" stroke-width="2.2" stroke-linejoin="round"/><path d="M17 4 H28 V34 M28 4 L32 1" fill="none" stroke="#333" stroke-width="1.6"/></svg>
<div class="t" style="left:1929px;top:1673.1px;font-size:27px;color:#666">Prueba</div>
<div class="a" style="left:2150px;top:1657px;width:382px;height:55px;background:#e8e8e8;border-radius:0 0 12px 12px"></div>
<svg style="left:2169px;top:1662px" width="45" height="43"><g transform="scale(0.98)"><rect x="1" y="1" width="21" height="16" fill="#222"/><g fill="#fff"><rect x="3" y="7.3" width="4.6" height="3"/><rect x="9.2" y="7.3" width="4.6" height="3"/><rect x="15.4" y="7.3" width="4.6" height="3"/><rect x="3" y="12" width="4.6" height="3"/><rect x="9.2" y="12" width="4.6" height="3"/><rect x="15.4" y="12" width="4.6" height="3"/></g><g fill="#9a9a9a"><rect x="3" y="2.8" width="4.6" height="3"/><rect x="9.2" y="2.8" width="4.6" height="3"/><rect x="15.4" y="2.8" width="4.6" height="3"/></g><path d="M4.5 17 C2.5 23 3 30 6.5 36" fill="none" stroke="#222" stroke-width="3.2" stroke-linecap="round"/><path d="M36 6.5 C39.5 12 40 19 38 24.5" fill="none" stroke="#222" stroke-width="3.2" stroke-linecap="round"/><path d="M19.5 16 C21.5 21 22 27 25 28.5 C27 29.3 29 28.6 30.5 27.5" fill="none" stroke="#222" stroke-width="4" stroke-linecap="round"/><path d="M30 12.5 C27 11 24.5 13.5 21.5 19.5 C19 24 15.5 26.5 11.5 26" fill="none" stroke="#222" stroke-width="2.2" stroke-linecap="round"/><ellipse cx="29.5" cy="13" rx="3.4" ry="2.6" transform="rotate(-25 29.5 13)" fill="#222"/><ellipse cx="12" cy="25.5" rx="3.4" ry="2.6" transform="rotate(-25 12 25.5)" fill="#222"/></g></svg>
<div class="t" style="left:2216px;top:1673.1px;font-size:27px;color:#666">Variable Studio</div>
<div class="a" style="left:2537px;top:1657px;width:339px;height:55px;background:#e8e8e8;border-radius:0 0 12px 12px"></div>
<svg style="left:2558px;top:1664px" width="38" height="38"><path d="M2 8 L8 2 H34 V31 L29 36 H2 Z" fill="#fff" stroke="#333" stroke-width="2.2"/><path d="M2 8 H29 V36 M29 8 L34 2" fill="none" stroke="#333" stroke-width="1.6"/><path d="M8 2 V24 L2 30 M8 24 H34" fill="none" stroke="#333" stroke-width="1"/><rect x="3" y="9" width="18" height="16" fill="#999"/></svg>
<div class="t" style="left:2603px;top:1673.1px;font-size:27px;color:#666">Assembly 1</div>

</body></html>
